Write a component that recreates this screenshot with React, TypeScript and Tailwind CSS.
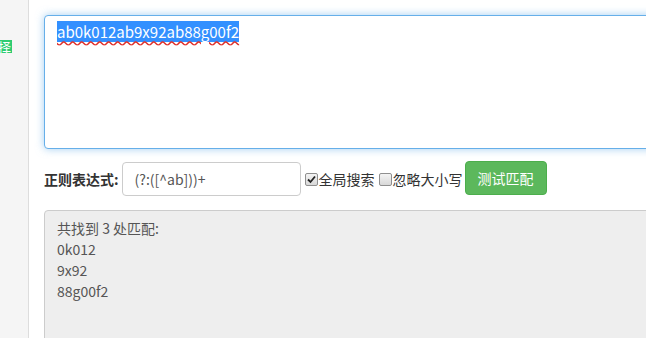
const font = { fontFamily: '"Noto Sans CJK SC", "Noto Sans", sans-serif' }

function Box({ checked }: { checked?: boolean }) {
  return (
    <span className="flex h-[13px] w-[13px] shrink-0 items-center justify-center rounded-[2px] border border-[#8f8f8f] bg-gradient-to-b from-[#f4f4f4] to-[#d8d8d8]">
      {checked && (
        <svg width="9" height="9" viewBox="0 0 9 9">
          <path d="M1 4.5 L3.5 7 L8 1.5" fill="none" stroke="#222" strokeWidth="1.8" />
        </svg>
      )}
    </span>
  )
}

export default function App() {
  return (
    <div className="flex h-[338px] w-[646px] overflow-hidden bg-white text-[14px] text-[#333]" style={font}>
      {/* sidebar */}
      <div className="w-[29px] shrink-0 border-r border-[#ddd] bg-[#f5f5f5] pt-[40px]">
        <div className="flex h-[13px] w-[12px] items-center justify-center overflow-hidden bg-[#2ecc71] text-[13px] leading-none text-white">
          <span className="-ml-[3px]">择</span>
        </div>
      </div>

      {/* main */}
      <div className="flex-1 pl-[15px] pt-[15px]">
        <div className="h-[134px] w-[640px] rounded-[4px] border border-[#66afe9] bg-white px-[12px] pt-[6px] shadow-[0_0_8px_rgba(102,175,233,0.6)]">
          <span className="bg-[#3390ff] text-[15px] leading-[20px] text-white underline decoration-wavy decoration-[#e0302a] underline-offset-2">
            ab0k012ab9x92ab88g00f2
          </span>
        </div>

        <div className="mt-[13px] flex items-center">
          <span className="mr-[3px] text-[14px] font-bold">正则表达式:</span>
          <input
            readOnly
            value="(?:([^ab]))+"
            className="h-[34px] w-[179px] rounded-[4px] border border-[#ccc] px-[12px] text-[14px] text-[#555] outline-none"
            style={font}
          />
          <span className="ml-[4px] flex items-center">
            <Box checked />
            <span className="ml-px">全局搜索</span>
          </span>
          <span className="ml-[4px] flex items-center">
            <Box />
            <span className="ml-px">忽略大小写</span>
          </span>
          <button className="ml-[2px] h-[34px] w-[82px] -translate-y-[1px] rounded-[4px] border border-[#4cae4c] bg-[#5cb85c] text-[14px] text-white" style={font}>
            测试匹配
          </button>
        </div>

        <div className="mt-[14px] h-[140px] w-[640px] rounded-[4px] border border-[#ccc] bg-[#eee] px-[12px] pt-[7px] text-[14px] leading-[21px] text-[#555]">
          <div>共找到 3 处匹配:</div>
          <div>0k012</div>
          <div>9x92</div>
          <div>88g00f2</div>
        </div>
      </div>
    </div>
  )
}
